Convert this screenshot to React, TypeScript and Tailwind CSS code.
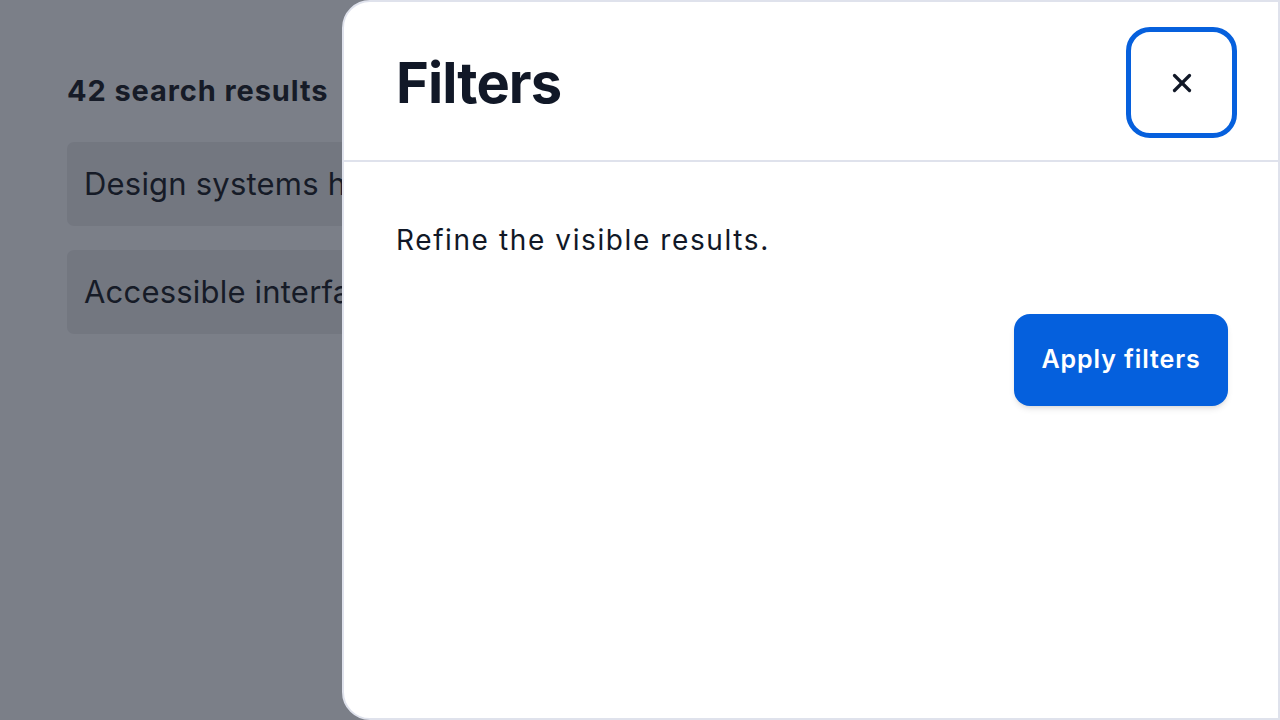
import { X } from "lucide-react";

const results = ["Design systems handbook", "Accessible interfaces in practice"];

export default function App() {
  return (
    <div
      className="relative w-full h-[720px] overflow-hidden bg-[#7b7f88]"
      style={{ fontFamily: "Inter, 'Noto Sans', sans-serif" }}
    >
      {/* page behind the dialog */}
      <div className="pl-[67px] pt-[71px] pr-[40px]">
        <h2 className="text-[29px] font-bold text-[#161b27] leading-[40px] tracking-[0.9px]">42 search results</h2>
        <ul className="mt-[31px] flex flex-col gap-[24px]">
          {results.map((r) => (
            <li
              key={r}
              className="h-[84px] rounded-[7px] bg-[#737780] px-[17px] pt-[1px] flex items-center text-[31px] text-[#161b27] whitespace-nowrap tracking-[0.2px]"
            >
              {r}
            </li>
          ))}
        </ul>
      </div>

      {/* filters drawer */}
      <div className="absolute top-0 right-0 h-[720px] w-[938px] bg-white border-2 border-[#dfe2ec] rounded-l-[28px] flex flex-col">
        <div className="h-[160px] border-b-2 border-[#dfe2ec] flex items-start justify-between pl-[52px] pr-[41px]">
          <h1 className="mt-[45px] text-[56px] font-bold text-[#111827] leading-[72px] tracking-[-0.9px]">Filters</h1>
          <button className="mt-[25px] w-[111px] h-[111px] rounded-[24px] border-[5px] border-[#0660dd] flex items-center justify-center text-[#111827]">
            <X size={30} strokeWidth={2.6} />
          </button>
        </div>
        <div className="pl-[52px] pr-[50px] pt-[58px] flex flex-col">
          <p className="text-[28px] text-[#111827] leading-[40px] tracking-[1.6px]">Refine the visible results.</p>
          <div className="mt-[54px] flex justify-end">
            <button className="w-[214px] h-[92px] rounded-[16px] bg-[#0560dd] text-white text-[25px] font-semibold shadow-md tracking-[0.9px]">
              Apply filters
            </button>
          </div>
        </div>
      </div>
    </div>
  );
}
